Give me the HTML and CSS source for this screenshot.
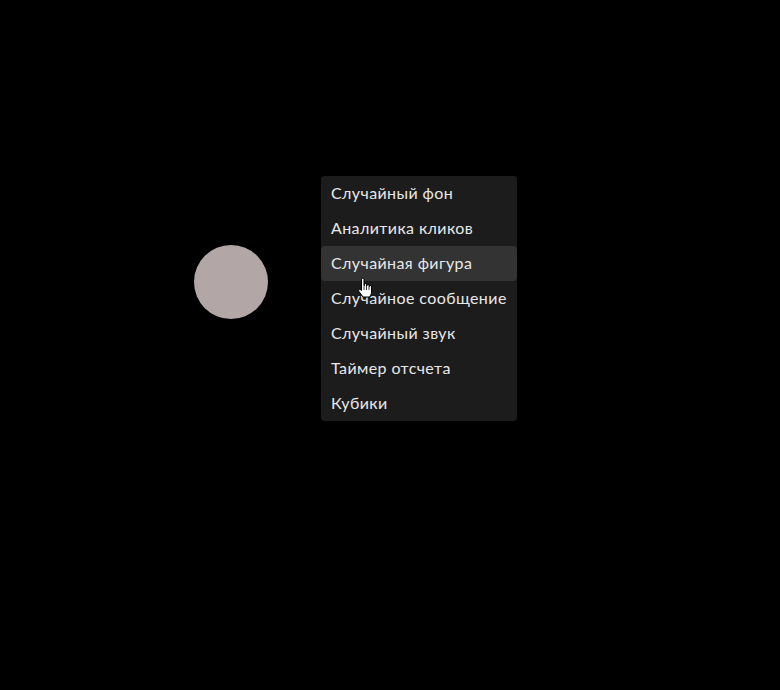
FILE: index.html
```html
<!DOCTYPE html>
<html lang="ru">
<head>
<meta charset="utf-8">
<link rel="stylesheet" href="styles.css">
</head>
<body>
<div class="canvas">
  <div class="shape"></div>
  <ul class="menu">
    <li class="item">Случайный фон</li>
    <li class="item">Аналитика кликов</li>
    <li class="item active">Случайная фигура</li>
    <li class="item">Случайное сообщение</li>
    <li class="item">Случайный звук</li>
    <li class="item">Таймер отсчета</li>
    <li class="item">Кубики</li>
  </ul>
  <svg class="cursor" width="17" height="22" viewBox="0 0 17 22">
    <path d="M5 1.5 C5.8 1 7 1.3 7 2.5 L7 8.5 L7.5 8.5 L7.5 7.2 C7.8 6.4 9.2 6.4 9.5 7.2 L9.5 9 L10 9 L10 8 C10.3 7.2 11.7 7.2 12 8 L12 9.5 L12.5 9.5 L12.5 9 C12.8 8.2 14.2 8.2 14.5 9 L14.5 15 C14.5 17 13.5 18.5 12.5 20 L6 20 C5 18.5 3.5 16.5 2 14.5 C1.2 13.4 1.8 12 3 12.3 L4.5 13.5 L4.5 2.5 C4.5 2 4.7 1.7 5 1.5 Z" fill="#ffffff" stroke="#000000" stroke-width="1" stroke-linejoin="round"/>
    <path d="M9.5 9 L9.5 13 M12 9.5 L12 13 M7 8.5 L7 13" stroke="#000" stroke-width="0.8"/>
  </svg>
</div>
</body>
</html>
```
FILE: styles.css
```css
html, body {
  margin: 0;
  padding: 0;
  background: #000000;
  width: 780px;
  height: 690px;
  overflow: hidden;
}
.canvas {
  position: relative;
  width: 780px;
  height: 690px;
  font-family: "Lato", "Open Sans", sans-serif;
}
.shape {
  position: absolute;
  left: 194px;
  top: 245px;
  width: 74px;
  height: 74px;
  border-radius: 50%;
  background: #b3a6a7;
}
.menu {
  position: absolute;
  left: 321px;
  top: 176px;
  width: 196px;
  margin: 0;
  padding: 0;
  list-style: none;
  background: #1c1c1c;
  border-radius: 4px;
}
.item {
  height: 35px;
  line-height: 33px;
  padding: 0 10px 2px;
  box-sizing: border-box;
  font-size: 16px;
  letter-spacing: 0.4px;
  color: #e8e8e8;
  border-radius: 4px;
  white-space: nowrap;
}
.item.active {
  background: #333333;
}
.cursor {
  position: absolute;
  left: 357px;
  top: 277px;
}
```
